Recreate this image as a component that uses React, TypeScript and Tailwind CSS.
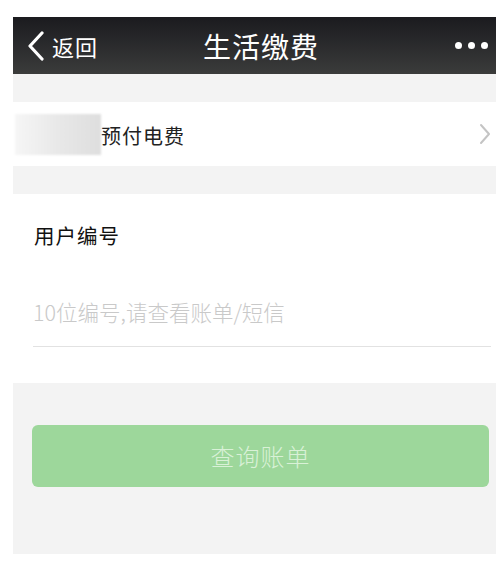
import React from "react";

export default function App() {
  const font = { fontFamily: '"Noto Sans CJK SC", "Noto Sans", sans-serif' };
  return (
    <div className="w-[503px] h-[567px] bg-white overflow-hidden" style={font}>
      <div className="ml-[13px] mt-[17px] w-[483px] flex flex-col">
        {/* Header */}
        <div className="h-[57px] bg-gradient-to-b from-[#1b1b1f] to-[#3b3c3b] flex items-center relative text-white">
          <div className="flex items-center pl-[14px]">
            <svg width="18" height="30" viewBox="0 0 18 30" className="mr-[7px]">
              <polyline points="15,2 3,15 15,28" fill="none" stroke="white" strokeWidth="3.2" strokeLinecap="round" strokeLinejoin="round" />
            </svg>
            <span className="text-[22px] leading-none tracking-[1px]">返回</span>
          </div>
          <div className="absolute left-0 right-0 flex justify-center pointer-events-none">
            <span className="text-[28px] leading-none tracking-[1px] ml-[13px]">生活缴费</span>
          </div>
          <div className="ml-auto mr-[8px] flex gap-[6px]">
            <span className="w-[7px] h-[7px] rounded-full bg-white" />
            <span className="w-[7px] h-[7px] rounded-full bg-white" />
            <span className="w-[7px] h-[7px] rounded-full bg-white" />
          </div>
        </div>
        <div className="h-[28px] bg-[#f3f3f3]" />
        {/* Row */}
        <div className="h-[64px] bg-white flex items-center">
          <div className="ml-[2px] w-[86px] h-[41px] bg-gradient-to-r from-[#f6f6f6] via-[#e8e8e8] to-[#dedede] blur-[1px]" />
          <span className="text-[20px] text-[#222] leading-none tracking-[1px] mt-[4px]">预付电费</span>
          <svg width="12" height="22" viewBox="0 0 12 22" className="ml-auto mr-[5px]">
            <polyline points="2,2 10,11 2,20" fill="none" stroke="#c4c4c4" strokeWidth="2" strokeLinecap="round" strokeLinejoin="round" />
          </svg>
        </div>
        <div className="h-[28px] bg-[#f3f3f3]" />
        {/* Input section */}
        <div className="h-[189px] bg-white flex flex-col">
          <div className="pl-[21px] pt-[31px] text-[20.5px] leading-none text-[#111] tracking-[1px]">用户编号</div>
          <div className="pl-[20px] pt-[55px] text-[21.5px] leading-none text-[#c9c9c9] font-light">10位编号,请查看账单/短信</div>
          <div className="ml-[20px] mr-[5px] mt-[24px] h-px bg-[#e2e2e2]" />
        </div>
        {/* Button section */}
        <div className="h-[171px] bg-[#f3f3f3] pt-[42px]">
          <div className="ml-[19px] mr-[7px] h-[62px] rounded-[6px] bg-[#9dd79b] flex items-center justify-center">
            <span className="text-[24px] leading-none text-[#d9f1d7] tracking-[1px] font-light">查询账单</span>
          </div>
        </div>
      </div>
    </div>
  );
}
